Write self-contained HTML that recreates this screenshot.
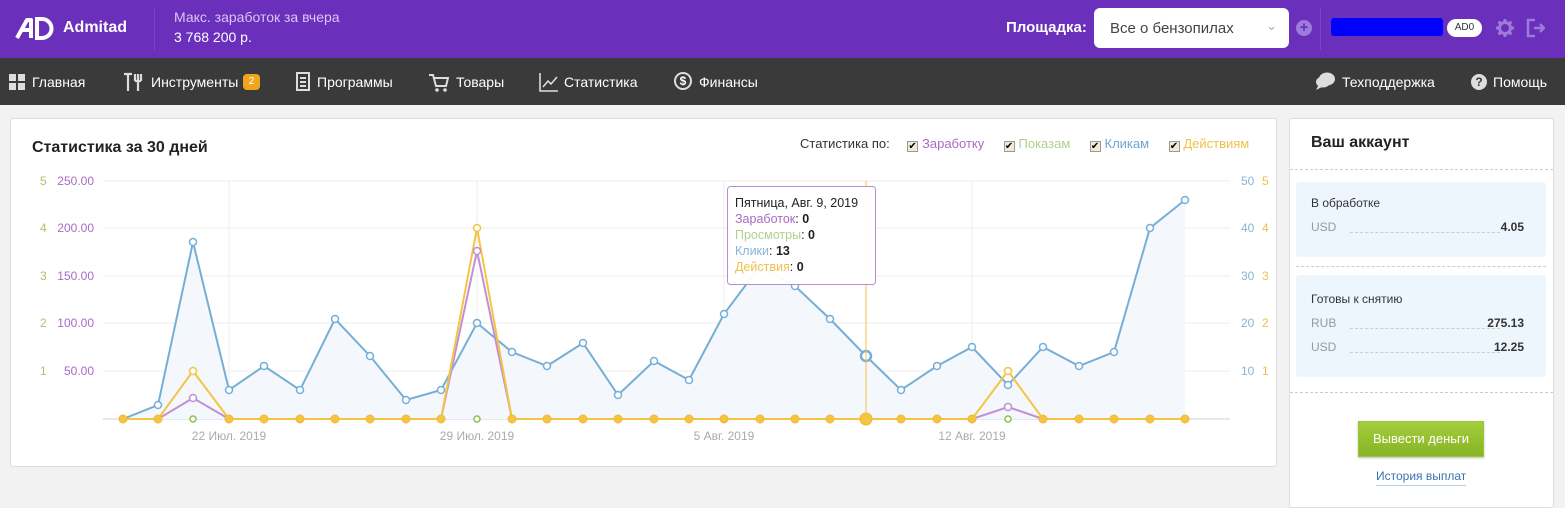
<!DOCTYPE html>
<html><head><meta charset="utf-8"><style>
*{box-sizing:border-box;margin:0;padding:0}
body{width:1565px;height:499px;overflow:hidden;background:#f2f2f2;font-family:"Liberation Sans",sans-serif;position:relative}
.top{position:absolute;left:0;top:0;width:1565px;height:58px;background:#6a2fbb;color:#fff}
.nav{position:absolute;left:0;top:58px;width:1565px;height:47px;background:#3a3a3a;color:#fff;font-size:14px}
.nav span{position:absolute;top:16px}
.card{position:absolute;background:#fff;border:1px solid #ddd;border-radius:3px}
.ab{position:absolute}
.cb{display:inline-block;width:11px;height:11px;border:1px solid #999;background:#f3ead6;font-size:10px;line-height:9px;vertical-align:-1px;color:#000}
</style></head><body>
<div class="top">
 <svg class="ab" style="left:14px;top:16px" width="56" height="24" viewBox="0 0 56 24"><path d="M3 22 L13 4 L17 4 L17 22 M9 14 L17 14" stroke="#fff" stroke-width="4" fill="none" stroke-linejoin="round"/><path d="M23 3 L28 3 A9.5 9.5 0 0 1 28 22 L23 22 Z" stroke="#fff" stroke-width="4" fill="none"/></svg>
 <div class="ab" style="left:63px;top:19px;font-weight:bold;font-size:16px">Admitad</div>
 <div class="ab" style="left:154px;top:8px;width:1px;height:42px;background:#7a45c6"></div>
 <div class="ab" style="left:174px;top:9px;font-size:14px;color:#d9c8f2">Макс. заработок за вчера</div>
 <div class="ab" style="left:174px;top:29px;font-size:14px">3 768 200 р.</div>
 <div class="ab" style="left:1006px;top:19px;font-size:15px;font-weight:bold">Площадка:</div>
 <div class="ab" style="left:1094px;top:8px;width:195px;height:40px;background:#fff;border-radius:6px;color:#444;font-size:15px;padding:12px 16px">Все о бензопилах<span style="position:absolute;right:12px;top:10px;color:#aaa;font-size:13px">&#8964;</span></div>
 <div class="ab" style="left:1296px;top:20px;width:16px;height:16px;border-radius:50%;background:#9d7bd8;color:#6a2fbb;font-size:15px;font-weight:bold;text-align:center;line-height:16px">+</div>
 <div class="ab" style="left:1320px;top:8px;width:1px;height:42px;background:#7a45c6"></div>
 <div class="ab" style="left:1331px;top:18px;width:112px;height:18px;background:#0000ff;border-radius:3px"></div>
 <div class="ab" style="left:1447px;top:19px;width:35px;height:18px;background:#fff;border-radius:9px;color:#333;font-size:10px;text-align:center;line-height:18px">AD0</div>
 <svg class="ab" style="left:1496px;top:19px" width="18" height="18" viewBox="0 0 18 18"><circle cx="9" cy="9" r="5.5" fill="none" stroke="#9d7bd8" stroke-width="3"/><path d="M9 0v4M9 14v4M0 9h4M14 9h4M2.6 2.6l2.8 2.8M12.6 12.6l2.8 2.8M2.6 15.4l2.8-2.8M12.6 5.4l2.8-2.8" stroke="#9d7bd8" stroke-width="3"/></svg>
 <svg class="ab" style="left:1525px;top:18px" width="20" height="20"><path d="M10 2H3v16h7M9 10h10M15 6l4 4-4 4" stroke="#9d7bd8" stroke-width="2.5" fill="none"/></svg>
</div>
<div class="nav">
 <svg class="ab" style="left:9px;top:16px" width="17" height="17"><rect x="0" y="0" width="7" height="7" fill="#ddd"/><rect x="9" y="0" width="7" height="7" fill="#ddd"/><rect x="0" y="9" width="7" height="7" fill="#ddd"/><rect x="9" y="9" width="7" height="7" fill="#ddd"/></svg>
 <span style="left:32px">Главная</span>
 <svg class="ab" style="left:122px;top:14px" width="24" height="20"><path d="M2 2h8M6 2v17M13 2v7M16 2v17M19 2v7M13 9h6" stroke="#ddd" stroke-width="2.2" fill="none"/></svg>
 <span style="left:151px">Инструменты</span>
 <div class="ab" style="left:243px;top:16px;width:17px;height:16px;background:#f0a51f;border-radius:4px;font-size:10px;text-align:center;line-height:16px">2</div>
 <svg class="ab" style="left:296px;top:14px" width="15" height="20"><rect x="1" y="1" width="12" height="17" stroke="#ddd" stroke-width="2" fill="none"/><path d="M4 6h6M4 10h6M4 14h6" stroke="#ddd" stroke-width="2"/></svg>
 <span style="left:317px">Программы</span>
 <svg class="ab" style="left:428px;top:15px" width="22" height="20"><path d="M1 2h4l3 11h10l2-8H6" stroke="#ddd" stroke-width="2" fill="none"/><circle cx="9" cy="17" r="1.8" fill="#ddd"/><circle cx="17" cy="17" r="1.8" fill="#ddd"/></svg>
 <span style="left:456px">Товары</span>
 <svg class="ab" style="left:539px;top:14px" width="20" height="20"><path d="M1 1v18h18M4 15l5-6 3 3 6-7" stroke="#ddd" stroke-width="1.6" fill="none"/></svg>
 <span style="left:564px">Статистика</span>
 <div class="ab" style="left:674px;top:14px;width:18px;height:18px;border:2px solid #ddd;border-radius:50%;font-size:12px;text-align:center;line-height:14px;font-weight:bold">$</div>
 <span style="left:699px">Финансы</span>
 <svg class="ab" style="left:1314px;top:13px" width="22" height="20"><ellipse cx="13" cy="8" rx="8" ry="6.5" fill="#ddd"/><ellipse cx="9" cy="11" rx="7" ry="5.5" fill="#ddd"/><path d="M4 15l-2 4 6-3z" fill="#ddd"/></svg>
 <span style="left:1342px">Техподдержка</span>
 <div class="ab" style="left:1471px;top:16px;width:16px;height:16px;border-radius:50%;background:#ddd;color:#3a3a3a;font-size:12px;font-weight:bold;text-align:center;line-height:16px">?</div>
 <span style="left:1493px">Помощь</span>
</div>

<div class="card" style="left:10px;top:118px;width:1267px;height:349px">
 <div class="ab" style="left:21px;top:20px;font-size:16px;font-weight:bold;color:#222">Статистика за 30 дней</div>
 <div class="ab" style="left:789px;top:17px;font-size:13px;color:#333;white-space:nowrap">Статистика по:
  <span class="cb" style="margin-left:14px">✔</span> <span style="color:#a96bc4">Заработку</span>
  <span class="cb" style="margin-left:16px">✔</span> <span style="color:#b4cf8e">Показам</span>
  <span class="cb" style="margin-left:16px">✔</span> <span style="color:#6fa5cf">Кликам</span>
  <span class="cb" style="margin-left:16px">✔</span> <span style="color:#f0c04a">Действиям</span>
 </div>
</div>
<svg class="ab" style="left:0;top:0" width="1565" height="499" font-family="Liberation Sans" font-size="12">
 <g stroke="#eee" stroke-width="1">
  <path d="M103 181H1230M103 228H1230M103 276H1230M103 323H1230M103 371H1230M229 181V419M477 181V419M724 181V419M972 181V419"/>
 </g>
 <path d="M103 419H1230" stroke="#ccd" />
 <g fill="#a96bc4" text-anchor="end"><text x="94" y="185">250.00</text><text x="94" y="232">200.00</text><text x="94" y="280">150.00</text><text x="94" y="327">100.00</text><text x="94" y="375">50.00</text></g>
 <g fill="#a4c66a"><text x="40" y="185">5</text><text x="40" y="232">4</text><text x="40" y="280">3</text><text x="40" y="327">2</text><text x="40" y="375">1</text></g>
 <g fill="#8ab4d4"><text x="1241" y="185">50</text><text x="1241" y="232">40</text><text x="1241" y="280">30</text><text x="1241" y="327">20</text><text x="1241" y="375">10</text></g>
 <g fill="#f0c04a"><text x="1262" y="185">5</text><text x="1262" y="232">4</text><text x="1262" y="280">3</text><text x="1262" y="327">2</text><text x="1262" y="375">1</text></g>
 <g fill="#aaa" text-anchor="middle"><text x="229" y="440">22 Июл. 2019</text><text x="477" y="440">29 Июл. 2019</text><text x="724" y="440">5 Авг. 2019</text><text x="972" y="440">12 Авг. 2019</text></g>
 <path d="M123 419L158 405L193 242L229 390L264 366L300 390L335 319L370 356L406 400L441 390L477 323L512 352L547 366L583 343L618 395L654 361L689 380L724 314L760 266L795 286L830 319L866 356L901 390L937 366L972 347L1008 385L1043 347L1079 366L1114 352L1150 228L1185 200L1185 419Z" fill="#f4f7fb"/>
 <path d="M123 419L158 405L193 242L229 390L264 366L300 390L335 319L370 356L406 400L441 390L477 323L512 352L547 366L583 343L618 395L654 361L689 380L724 314L760 266L795 286L830 319L866 356L901 390L937 366L972 347L1008 385L1043 347L1079 366L1114 352L1150 228L1185 200" fill="none" stroke="#75afd6" stroke-width="2"/>
 <g fill="#fff" stroke="#75afd6" stroke-width="1.5"><circle cx="158" cy="405" r="3.5"/><circle cx="193" cy="242" r="3.5"/><circle cx="229" cy="390" r="3.5"/><circle cx="264" cy="366" r="3.5"/><circle cx="300" cy="390" r="3.5"/><circle cx="335" cy="319" r="3.5"/><circle cx="370" cy="356" r="3.5"/><circle cx="406" cy="400" r="3.5"/><circle cx="441" cy="390" r="3.5"/><circle cx="477" cy="323" r="3.5"/><circle cx="512" cy="352" r="3.5"/><circle cx="547" cy="366" r="3.5"/><circle cx="583" cy="343" r="3.5"/><circle cx="618" cy="395" r="3.5"/><circle cx="654" cy="361" r="3.5"/><circle cx="689" cy="380" r="3.5"/><circle cx="724" cy="314" r="3.5"/><circle cx="795" cy="286" r="3.5"/><circle cx="830" cy="319" r="3.5"/><circle cx="866" cy="356" r="5" stroke-width="2.5"/><circle cx="901" cy="390" r="3.5"/><circle cx="937" cy="366" r="3.5"/><circle cx="972" cy="347" r="3.5"/><circle cx="1008" cy="385" r="3.5"/><circle cx="1043" cy="347" r="3.5"/><circle cx="1079" cy="366" r="3.5"/><circle cx="1114" cy="352" r="3.5"/><circle cx="1150" cy="228" r="3.5"/><circle cx="1185" cy="200" r="3.5"/></g>
 <path d="M866 181V419" stroke="#f0c04a" stroke-width="1"/>
 <path d="M123 419H158L193 398L229 419H441L477 251L512 419H972L1008 407L1043 419" fill="none" stroke="#c08fd6" stroke-width="2"/>
 <path d="M123 419H158L193 371L229 419H441L477 228L512 419H972L1008 371L1043 419H1185" fill="none" stroke="#f5c443" stroke-width="2"/>
 <g fill="#fff" stroke="#c08fd6" stroke-width="1.5"><circle cx="193" cy="398" r="3.5"/><circle cx="477" cy="251" r="3.5"/><circle cx="1008" cy="407" r="3.5"/></g>
 <g fill="#fff" stroke="#f5c443" stroke-width="1.5"><circle cx="193" cy="371" r="3.5"/><circle cx="477" cy="228" r="3.5"/><circle cx="1008" cy="371" r="3.5"/></g>
 <g fill="#f5c443" stroke="#f0b838" stroke-width="1"><circle cx="123" cy="419" r="4"/><circle cx="158" cy="419" r="4"/><circle cx="229" cy="419" r="4"/><circle cx="264" cy="419" r="4"/><circle cx="300" cy="419" r="4"/><circle cx="335" cy="419" r="4"/><circle cx="370" cy="419" r="4"/><circle cx="406" cy="419" r="4"/><circle cx="441" cy="419" r="4"/><circle cx="512" cy="419" r="4"/><circle cx="547" cy="419" r="4"/><circle cx="583" cy="419" r="4"/><circle cx="618" cy="419" r="4"/><circle cx="654" cy="419" r="4"/><circle cx="689" cy="419" r="4"/><circle cx="724" cy="419" r="4"/><circle cx="760" cy="419" r="4"/><circle cx="795" cy="419" r="4"/><circle cx="830" cy="419" r="4"/><circle cx="866" cy="419" r="6"/><circle cx="901" cy="419" r="4"/><circle cx="937" cy="419" r="4"/><circle cx="972" cy="419" r="4"/><circle cx="1043" cy="419" r="4"/><circle cx="1079" cy="419" r="4"/><circle cx="1114" cy="419" r="4"/><circle cx="1150" cy="419" r="4"/><circle cx="1185" cy="419" r="4"/></g>
 <g fill="#fff" stroke="#8cbf4a" stroke-width="1.5"><circle cx="193" cy="419" r="3"/><circle cx="477" cy="419" r="3"/><circle cx="1008" cy="419" r="3"/></g>
 <rect x="727.5" y="186.5" width="148" height="98" rx="3" fill="#fff" fill-opacity="0.95" stroke="#b38fd0"/>
 <g font-size="12.5"><text x="735" y="207" fill="#222">Пятница, Авг. 9, 2019</text>
 <text x="735" y="223" fill="#a96bc4">Заработок<tspan fill="#222">: <tspan font-weight="bold">0</tspan></tspan></text>
 <text x="735" y="239" fill="#b4cf8e">Просмотры<tspan fill="#222">: <tspan font-weight="bold">0</tspan></tspan></text>
 <text x="735" y="255" fill="#8ab4d4">Клики<tspan fill="#222">: <tspan font-weight="bold">13</tspan></tspan></text>
 <text x="735" y="271" fill="#f0c04a">Действия<tspan fill="#222">: <tspan font-weight="bold">0</tspan></tspan></text></g>
</svg>

<div class="card" style="left:1289px;top:118px;width:265px;height:390px;font-size:12px">
 <div class="ab" style="left:21px;top:15px;font-size:16px;font-weight:bold;color:#222">Ваш аккаунт</div>
 <div class="ab" style="left:0;top:50px;width:263px;border-top:1px dashed #ccc"></div>
 <div class="ab" style="left:6px;top:63px;width:250px;height:75px;background:#eef6fd;border-radius:3px">
  <div class="ab" style="left:15px;top:14px;color:#333">В обработке</div>
  <div class="ab" style="left:15px;top:38px;color:#999">USD</div>
  <div class="ab" style="left:54px;top:50px;width:150px;border-top:1px dashed #ccc"></div>
  <div class="ab" style="right:22px;top:38px;color:#333;font-weight:bold">4.05</div>
 </div>
 <div class="ab" style="left:6px;top:147px;width:250px;border-top:1px dashed #ccc"></div>
 <div class="ab" style="left:6px;top:156px;width:250px;height:102px;background:#eef6fd;border-radius:3px">
  <div class="ab" style="left:15px;top:17px;color:#333">Готовы к снятию</div>
  <div class="ab" style="left:15px;top:41px;color:#999">RUB</div>
  <div class="ab" style="left:54px;top:53px;width:150px;border-top:1px dashed #ccc"></div>
  <div class="ab" style="right:22px;top:41px;color:#333;font-weight:bold">275.13</div>
  <div class="ab" style="left:15px;top:65px;color:#999">USD</div>
  <div class="ab" style="left:54px;top:77px;width:150px;border-top:1px dashed #ccc"></div>
  <div class="ab" style="right:22px;top:65px;color:#333;font-weight:bold">12.25</div>
 </div>
 <div class="ab" style="left:0;top:273px;width:263px;border-top:1px dashed #ccc"></div>
 <div class="ab" style="left:68px;top:302px;width:126px;height:36px;background:linear-gradient(#a4cc3c,#86b526);border:1px solid #9bc63a;color:#fff;text-align:center;line-height:34px;font-size:13px;box-shadow:0 1px 2px #bbb">Вывести деньги</div>
 <div class="ab" style="left:86px;top:350px;color:#3a73b0;border-bottom:1px solid #b7cde4;padding-bottom:2px">История выплат</div>
</div>
</body></html>
